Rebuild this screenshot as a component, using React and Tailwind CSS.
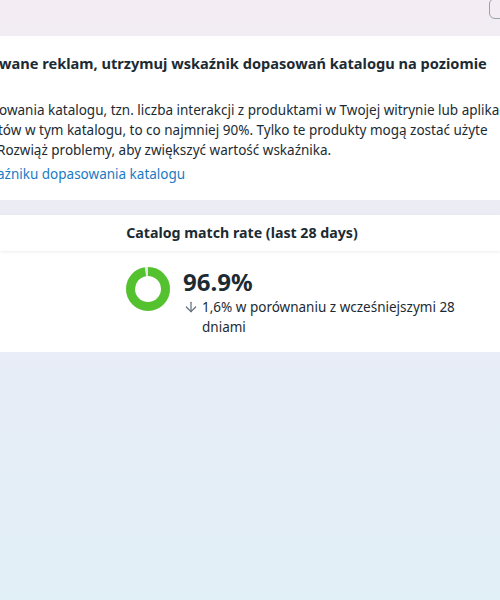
import { ArrowDown } from "lucide-react";

const font = { fontFamily: '"Noto Sans", "Open Sans", Arial, sans-serif' };

// match rate donut: green arc with the missing share shown in grey at the top
function Donut({ value }) {
  const r = 17.5;
  const c = 2 * Math.PI * r;
  const filled = (value / 100) * c;
  return (
    <svg width="44" height="44" viewBox="0 0 44 44" className="shrink-0">
      <circle cx="22" cy="22" r={r} fill="none" stroke="#e4e6eb" strokeWidth="9" />
      <circle
        cx="22"
        cy="22"
        r={r}
        fill="none"
        stroke="#54c22e"
        strokeWidth="9"
        strokeDasharray={`${filled} ${c}`}
        transform="rotate(-90 22 22)"
      />
    </svg>
  );
}

function App() {
  return (
    <div
      className="w-[500px] min-h-[600px] overflow-hidden bg-gradient-to-b from-[#f3ecf3] via-[#e9ecf6] to-[#e1eff7] text-[#1c2b33]"
      style={font}
    >
      {/* toolbar strip, only the edge of a button shows */}
      <div className="h-9 flex justify-end">
        <div className="w-[42px] h-[21px] -mt-[2px] -mr-[31px] border border-[#98a2ab] rounded-md"></div>
      </div>

      {/* recommendation card */}
      <div className="bg-white h-[164px] pt-[15px] overflow-hidden">
        <div className="ml-[-1px] text-[14.6px] leading-[24px] font-bold whitespace-nowrap">
          wane reklam, utrzymuj wskaźnik dopasowań katalogu na poziomie
        </div>
        <div className="h-[25px]"></div>
        <div className="text-[13.5px] leading-[20px] whitespace-nowrap">
          <div className="ml-[-1px]">
            owania katalogu, tzn. liczba interakcji z produktami w Twojej witrynie lub aplikacji
          </div>
          <div className="ml-[-2px]">
            tów w tym katalogu, to co najmniej 90%. Tylko te produkty mogą zostać użyte
          </div>
          <div className="ml-[-3px]">Rozwiąż problemy, aby zwiększyć wartość wskaźnika.</div>
        </div>
        <div className="mt-[4px] ml-[-3px] text-[13.5px] leading-[20px] text-[#1a7bc4] whitespace-nowrap">
          aźniku dopasowania katalogu
        </div>
      </div>

      {/* catalog match rate card */}
      <div className="mt-[15px] bg-white">
        <div className="h-[36px] flex items-center justify-center text-[14.2px] font-bold shadow-[0_1px_3px_rgba(0,0,0,0.08)]">
          <span className="-ml-[16px]">Catalog match rate (last 28 days)</span>
        </div>
        <div className="h-[101px] flex pl-[126px] pt-[16px]">
          <div className="flex gap-[13px]">
            <Donut value={96.9} />
            <div className="pt-[1px]">
              <div className="text-[24px] leading-[28px] font-bold">96.9%</div>
              <div className="flex gap-[3px] text-[13.5px] leading-[20px] mt-[1px]">
                <ArrowDown size={16} strokeWidth={1.8} className="text-[#5f6b76] mt-[2px] shrink-0" />
                <div className="w-[270px]">1,6% w porównaniu z wcześniejszymi 28 dniami</div>
              </div>
            </div>
          </div>
        </div>
      </div>
    </div>
  );
}

export default App;
